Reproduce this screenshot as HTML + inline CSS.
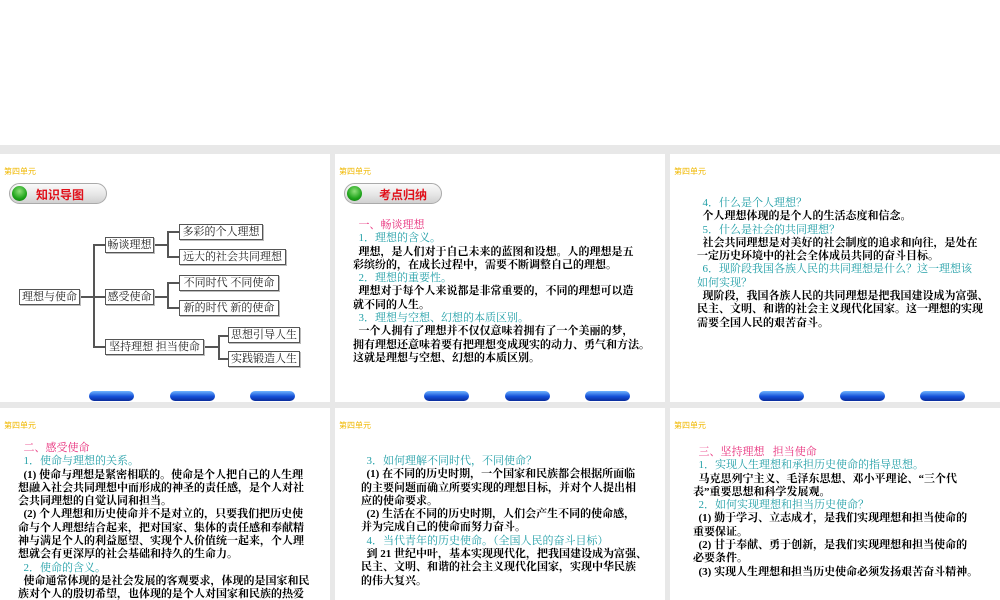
<!DOCTYPE html>
<html><head><meta charset="utf-8"><style>
body{margin:0;width:1000px;height:600px;position:relative;background:#fff;overflow:hidden;font-family:"Liberation Serif","Noto Serif CJK SC",serif}
.bg{position:absolute;left:0;top:145px;width:1000px;height:455px;background:#e8e8e8}
.s{position:absolute;background:#fff;overflow:hidden}
.u{position:absolute;left:4px;top:12px;font-size:8px;color:#f0b800;font-family:"Liberation Sans","Noto Sans CJK SC",sans-serif}
.pill{position:absolute;left:9px;top:29px;width:96px;height:19px;border:1px solid #aaa;border-radius:11px;background:linear-gradient(#fafafa,#e4e4e4 60%,#d0d0d0)}
.pill i{position:absolute;left:2px;top:2px;width:15px;height:15px;border-radius:50%;background:radial-gradient(circle at 50% 35%,#8fe07a,#1ea41a 60%,#0c6a0c)}
.pill b{position:absolute;left:26px;top:2px;font-size:12px;color:#e0101a;font-family:"Liberation Sans","Noto Sans CJK SC",sans-serif}
.btn{position:absolute;width:45px;height:10px;border-radius:6px;background:linear-gradient(#6fb4ff,#1450d8 55%,#0a2c9a);top:237px}
.t{position:absolute;font-size:11px;line-height:13.3px;white-space:nowrap;color:#000;font-weight:bold}
.p{color:#e8307c;font-weight:normal}
.c{color:#24a0a8;font-weight:normal}
.bx{position:absolute;box-sizing:border-box;border:1.5px solid #555;box-shadow:1px 1px 0 #bbb;font-size:11px;line-height:14px;height:16px;text-align:center;white-space:nowrap;overflow:hidden;color:#222;background:#fff}
.l{position:absolute;background:#555}
</style></head><body>
<div class="bg"></div>

<div class="s" style="left:0;top:154px;width:330px;height:248px">
<div class="u">第四单元</div>
<div class="pill"><i></i><b>知识导图</b></div>
<div class="btn" style="left:89px"></div><div class="btn" style="left:170px"></div><div class="btn" style="left:250px"></div>
</div>
<div class="l" style="left:79px;top:296px;width:26px;height:1.5px"></div>
<div class="l" style="left:93px;top:244px;width:1.5px;height:103px"></div>
<div class="l" style="left:93px;top:244px;width:12px;height:1.5px"></div>
<div class="l" style="left:93px;top:346px;width:12px;height:1.5px"></div>
<div class="l" style="left:154px;top:244px;width:13px;height:1.5px"></div>
<div class="l" style="left:167px;top:231px;width:1.5px;height:26px"></div>
<div class="l" style="left:167px;top:231px;width:12px;height:1.5px"></div>
<div class="l" style="left:167px;top:256px;width:12px;height:1.5px"></div>
<div class="l" style="left:154px;top:296px;width:13px;height:1.5px"></div>
<div class="l" style="left:167px;top:282px;width:1.5px;height:26px"></div>
<div class="l" style="left:167px;top:282px;width:12px;height:1.5px"></div>
<div class="l" style="left:167px;top:307px;width:12px;height:1.5px"></div>
<div class="l" style="left:204px;top:346px;width:14px;height:1.5px"></div>
<div class="l" style="left:218px;top:335px;width:1.5px;height:24px"></div>
<div class="l" style="left:218px;top:335px;width:10px;height:1.5px"></div>
<div class="l" style="left:218px;top:358px;width:10px;height:1.5px"></div>
<div class="bx" style="left:19px;top:289px;width:61px">理想与使命</div>
<div class="bx" style="left:105px;top:237px;width:49px">畅谈理想</div>
<div class="bx" style="left:105px;top:289px;width:49px">感受使命</div>
<div class="bx" style="left:105px;top:339px;width:99px">坚持理想 担当使命</div>
<div class="bx" style="left:179px;top:224px;width:84px">多彩的个人理想</div>
<div class="bx" style="left:179px;top:249px;width:107px">远大的社会共同理想</div>
<div class="bx" style="left:179px;top:275px;width:100px">不同时代 不同使命</div>
<div class="bx" style="left:179px;top:300px;width:100px">新的时代 新的使命</div>
<div class="bx" style="left:228px;top:327px;width:72px">思想引导人生</div>
<div class="bx" style="left:228px;top:351px;width:72px">实践锻造人生</div>

<div class="s" style="left:335px;top:154px;width:330px;height:248px">
<div class="u">第四单元</div>
<div class="pill"><i></i><b style="left:34px">考点归纳</b></div>
<div class="t" style="left:18px;top:65px">
<span class="p">&nbsp;&nbsp;一、畅谈理想</span><br>
<span class="c">&nbsp;&nbsp;1．理想的含义。</span><br>
&nbsp;&nbsp;理想，是人们对于自己未来的蓝图和设想。人的理想是五<br>
彩缤纷的，在成长过程中，需要不断调整自己的理想。<br>
<span class="c">&nbsp;&nbsp;2．理想的重要性。</span><br>
&nbsp;&nbsp;理想对于每个人来说都是非常重要的，不同的理想可以造<br>
就不同的人生。<br>
<span class="c">&nbsp;&nbsp;3．理想与空想、幻想的本质区别。</span><br>
&nbsp;&nbsp;一个人拥有了理想并不仅仅意味着拥有了一个美丽的梦，<br>
拥有理想还意味着要有把理想变成现实的动力、勇气和方法。<br>
这就是理想与空想、幻想的本质区别。</div>
<div class="btn" style="left:89px"></div><div class="btn" style="left:170px"></div><div class="btn" style="left:250px"></div>
</div>

<div class="s" style="left:670px;top:154px;width:330px;height:248px">
<div class="u">第四单元</div>
<div class="t" style="left:27px;top:43px">
<span class="c">&nbsp;&nbsp;4．什么是个人理想？</span><br>
&nbsp;&nbsp;个人理想体现的是个人的生活态度和信念。<br>
<span class="c">&nbsp;&nbsp;5．什么是社会的共同理想？</span><br>
&nbsp;&nbsp;社会共同理想是对美好的社会制度的追求和向往，是处在<br>
一定历史环境中的社会全体成员共同的奋斗目标。<br>
<span class="c">&nbsp;&nbsp;6．现阶段我国各族人民的共同理想是什么？这一理想该<br>如何实现？</span><br>
&nbsp;&nbsp;现阶段，我国各族人民的共同理想是把我国建设成为富强、<br>
民主、文明、和谐的社会主义现代化国家。这一理想的实现<br>
需要全国人民的艰苦奋斗。</div>
<div class="btn" style="left:89px"></div><div class="btn" style="left:170px"></div><div class="btn" style="left:250px"></div>
</div>

<div class="s" style="left:0;top:408px;width:330px;height:192px">
<div class="u">第四单元</div>
<div class="t" style="left:18px;top:34px">
<span class="p">&nbsp;&nbsp;二、感受使命</span><br>
<span class="c">&nbsp;&nbsp;1．使命与理想的关系。</span><br>
&nbsp;&nbsp;(1) 使命与理想是紧密相联的。使命是个人把自己的人生理<br>
想融入社会共同理想中而形成的神圣的责任感，是个人对社<br>
会共同理想的自觉认同和担当。<br>
&nbsp;&nbsp;(2) 个人理想和历史使命并不是对立的，只要我们把历史使<br>
命与个人理想结合起来，把对国家、集体的责任感和奉献精<br>
神与满足个人的利益愿望、实现个人价值统一起来，个人理<br>
想就会有更深厚的社会基础和持久的生命力。<br>
<span class="c">&nbsp;&nbsp;2．使命的含义。</span><br>
&nbsp;&nbsp;使命通常体现的是社会发展的客观要求，体现的是国家和民<br>
族对个人的殷切希望，也体现的是个人对国家和民族的热爱</div>
</div>

<div class="s" style="left:335px;top:408px;width:330px;height:192px">
<div class="u">第四单元</div>
<div class="t" style="left:26px;top:47px">
<span class="c">&nbsp;&nbsp;3．如何理解不同时代，不同使命？</span><br>
&nbsp;&nbsp;(1) 在不同的历史时期，一个国家和民族都会根据所面临<br>
的主要问题而确立所要实现的理想目标，并对个人提出相<br>
应的使命要求。<br>
&nbsp;&nbsp;(2) 生活在不同的历史时期，人们会产生不同的使命感，<br>
并为完成自己的使命而努力奋斗。<br>
<span class="c">&nbsp;&nbsp;4．当代青年的历史使命。（全国人民的奋斗目标）</span><br>
&nbsp;&nbsp;到 21 世纪中叶，基本实现现代化，把我国建设成为富强、<br>
民主、文明、和谐的社会主义现代化国家，实现中华民族<br>
的伟大复兴。</div>
</div>

<div class="s" style="left:670px;top:408px;width:330px;height:192px">
<div class="u">第四单元</div>
<div class="t" style="left:23px;top:38px">
<span class="p">&nbsp;&nbsp;三、坚持理想&nbsp;&nbsp;&nbsp;担当使命</span><br>
<span class="c">&nbsp;&nbsp;1．实现人生理想和承担历史使命的指导思想。</span><br>
&nbsp;&nbsp;马克思列宁主义、毛泽东思想、邓小平理论、“三个代<br>
表”重要思想和科学发展观。<br>
<span class="c">&nbsp;&nbsp;2．如何实现理想和担当历史使命？</span><br>
&nbsp;&nbsp;(1) 勤于学习、立志成才，是我们实现理想和担当使命的<br>
重要保证。<br>
&nbsp;&nbsp;(2) 甘于奉献、勇于创新，是我们实现理想和担当使命的<br>
必要条件。<br>
&nbsp;&nbsp;(3) 实现人生理想和担当历史使命必须发扬艰苦奋斗精神。</div>
</div>
</body></html>
